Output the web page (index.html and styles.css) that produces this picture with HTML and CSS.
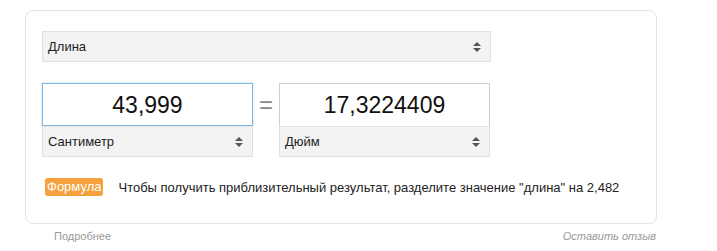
FILE: index.html
```html
<!DOCTYPE html>
<html lang="ru">
<head>
<meta charset="utf-8">
<title>Конвертер</title>
<link rel="stylesheet" href="styles.css">
</head>
<body>
<div class="wrap">
  <div class="card">
    <div class="select select-wide">
      <span>Длина</span>
      <span class="arrows"><i class="up"></i><i class="down"></i></span>
    </div>
    <div class="row">
      <div class="col">
        <div class="input focus">43,999</div>
        <div class="select">
          <span>Сантиметр</span>
          <span class="arrows"><i class="up"></i><i class="down"></i></span>
        </div>
      </div>
      <div class="eq">=</div>
      <div class="col">
        <div class="input">17,3224409</div>
        <div class="select">
          <span>Дюйм</span>
          <span class="arrows"><i class="up"></i><i class="down"></i></span>
        </div>
      </div>
    </div>
    <div class="formula">
      <span class="badge">Формула</span>
      <span class="formula-text">Чтобы получить приблизительный результат, разделите значение "длина" на 2,482</span>
    </div>
  </div>
  <div class="footer">
    <a class="more">Подробнее</a>
    <a class="feedback">Оставить отзыв</a>
  </div>
</div>
</body>
</html>
```

FILE: styles.css
```css
* { box-sizing: border-box; }
html, body { margin: 0; padding: 0; background: #fff; }
body {
  font-family: "Liberation Sans", Arial, sans-serif;
  color: #222;
}
.wrap {
  margin-left: 25px;
  padding-top: 10px;
  width: 632px;
}
.card {
  border: 1px solid #e3e3e3;
  border-radius: 8px;
  padding: 20px 16px 27px 16px;
  height: 214px;
}
.select {
  display: flex;
  align-items: center;
  justify-content: space-between;
  height: 31px;
  background: #f3f3f3;
  border: 1px solid #e0e0e0;
  padding: 0 9px 0 5px;
  font-size: 13px;
  color: #222;
}
.select-wide { width: 449px; }
.arrows {
  display: flex;
  flex-direction: column;
  gap: 2px;
}
.arrows i {
  display: block;
  width: 0;
  height: 0;
  border-left: 4px solid transparent;
  border-right: 4px solid transparent;
}
.arrows .up { border-bottom: 4px solid #555; }
.arrows .down { border-top: 4px solid #555; }
.row {
  display: flex;
  margin-top: 21px;
}
.col { width: 211px; }
.input {
  height: 43px;
  border: 1px solid #cfcfcf;
  border-bottom: none;
  display: flex;
  align-items: center;
  justify-content: center;
  font-size: 23px;
  color: #111;
  padding-top: 1px;
}
.input.focus {
  border: 1px solid #7db8e3;
  border-bottom: 1px solid #7db8e3;
  box-shadow: 0 0 2px rgba(102, 175, 233, 0.5);
}
.col .select { border-top: 1px solid #e6e6e6; }
.eq {
  width: 26px;
  height: 43px;
  display: flex;
  align-items: center;
  justify-content: center;
  font-size: 24px;
  color: #888;
}
.formula {
  display: flex;
  align-items: center;
  margin-top: 21px;
  font-size: 13px;
}
.badge {
  background: #f5a13d;
  color: #fff;
  border-radius: 3px;
  padding: 2px 2px 2px 2px;
  line-height: 14px;
  margin-left: 3px;
}
.formula-text {
  margin-left: 15px;
  color: #222;
}
.footer {
  display: flex;
  justify-content: space-between;
  padding: 6px 1px 0 29px;
  font-size: 11px;
  color: #999;
}
.feedback { font-style: italic; }
```
